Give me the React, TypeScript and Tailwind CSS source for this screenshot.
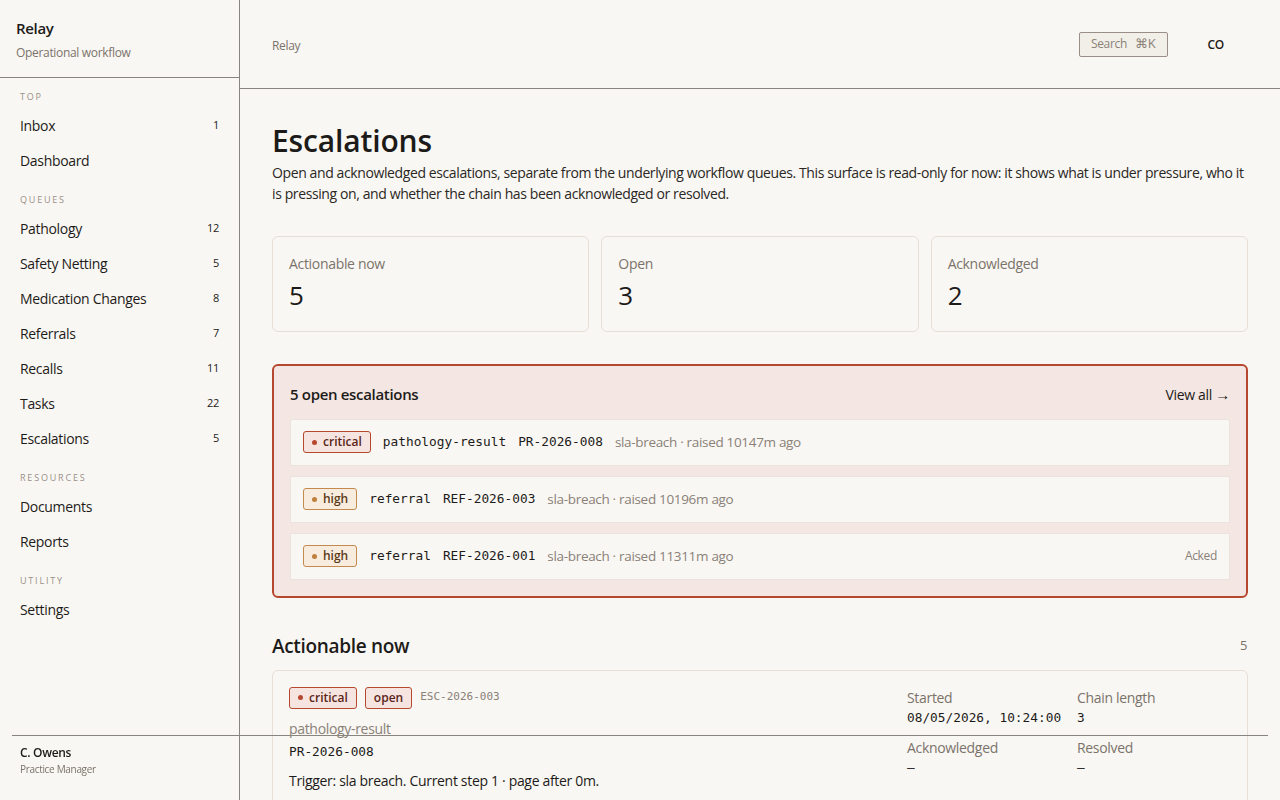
import React from 'react';

const sans = "font-['Open_Sans','Noto_Sans',sans-serif]";
const mono = "font-['DejaVu_Sans_Mono','Liberation_Mono',monospace] tracking-normal";

type NavItem = { label: string; count?: number };
type NavGroup = { title: string; items: NavItem[] };

const NAV: NavGroup[] = [
  { title: 'Top', items: [{ label: 'Inbox', count: 1 }, { label: 'Dashboard' }] },
  {
    title: 'Queues',
    items: [
      { label: 'Pathology', count: 12 },
      { label: 'Safety Netting', count: 5 },
      { label: 'Medication Changes', count: 8 },
      { label: 'Referrals', count: 7 },
      { label: 'Recalls', count: 11 },
      { label: 'Tasks', count: 22 },
      { label: 'Escalations', count: 5 },
    ],
  },
  { title: 'Resources', items: [{ label: 'Documents' }, { label: 'Reports' }] },
  { title: 'Utility', items: [{ label: 'Settings' }] },
];

const OPEN = [
  { sev: 'critical', kind: 'pathology-result', ref: 'PR-2026-008', ago: '10147m', acked: false },
  { sev: 'high', kind: 'referral', ref: 'REF-2026-003', ago: '10196m', acked: false },
  { sev: 'high', kind: 'referral', ref: 'REF-2026-001', ago: '11311m', acked: true },
];

function SevBadge({ sev }: { sev: string }) {
  const critical = sev === 'critical';
  return (
    <span
      className={`inline-flex items-center gap-1.5 h-[22px] px-2 rounded-[3px] border text-[12px] font-semibold tracking-normal ${
        critical ? 'border-[#b5482e] bg-[#f6e4e0] text-[#5a2418]' : 'border-[#c28a4c] bg-[#f8ecdf] text-[#5b3a16]'
      }`}
    >
      <span className={`w-[5px] h-[5px] rounded-full ${critical ? 'bg-[#b5482e]' : 'bg-[#c07f3a]'}`} />
      {sev}
    </span>
  );
}

function Sidebar() {
  return (
    <aside className="w-[240px] shrink-0 h-full border-r border-[#8a847e] flex flex-col">
      <div className="h-[78px] border-b border-[#8a847e] px-4 pt-[17px]">
        <div className="text-[15px] font-semibold text-[#1d1b19] leading-[22px]">Relay</div>
        <div className="text-[12px] text-[#7b736b] mt-[6px] leading-[16px]">Operational workflow</div>
      </div>
      <nav className="px-5 pt-[10px] flex flex-col gap-[13px]">
        {NAV.map(group => (
          <div key={group.title}>
            <div className="text-[9px] uppercase tracking-[0.2em] text-[#9a9088] h-[20px] leading-[18px]">{group.title}</div>
            {group.items.map(item => (
              <div key={item.label} className="h-[35px] flex items-center justify-between text-[14px] text-[#1d1b19] pr-[20px] -mr-5">
                <span>{item.label}</span>
                {item.count !== undefined && <span className="text-[11px] text-[#1d1b19]">{item.count}</span>}
              </div>
            ))}
          </div>
        ))}
      </nav>
    </aside>
  );
}

function StatCard({ label, value }: { label: string; value: number }) {
  return (
    <div className="border border-[#e6dfd7] rounded-[6px] px-4 pt-[18px] h-[96px]">
      <div className="text-[14px] text-[#7b736b] leading-[18px]">{label}</div>
      <div className="text-[26px] text-[#1d1b19] leading-[34px] mt-[5px]">{value}</div>
    </div>
  );
}

function Field({ label, value }: { label: string; value: string }) {
  return (
    <div>
      <div className="text-[14px] text-[#7b736b] leading-[20px]">{label}</div>
      <div className={`${mono} text-[12.8px] text-[#1d1b19] leading-[20px]`}>{value}</div>
    </div>
  );
}

export default function App() {
  return (
    <div className={`${sans} tracking-[-0.02em] h-screen w-full overflow-hidden bg-[#f9f7f3] flex relative`}>
      <Sidebar />
      <main className="flex-1 min-w-0 h-full overflow-hidden">
        <header className="h-[89px] border-b border-[#8a847e] flex items-center justify-between pl-8 pr-[56px] pt-[2px]">
          <span className="text-[12px] text-[#7b736b] mt-[2px]">Relay</span>
          <div className="flex items-center gap-[40px]">
            <span className="h-[25px] w-[89px] -mt-[2px] border border-[#9a8f88] rounded-[2px] bg-[#f2efe8] text-[12px] text-[#8a8178] flex items-center justify-center gap-2">
              Search <span className="text-[13px]">⌘K</span>
            </span>
            <span className="text-[12px] font-semibold text-[#1d1b19]">CO</span>
          </div>
        </header>

        <div className="px-8 pt-[32px]">
          <h1 className="text-[30px] font-semibold text-[#1d1b19] leading-[40px] tracking-[-0.005em]">Escalations</h1>
          <p className="text-[14px] text-[#2a2724] leading-[21px] mt-[1px] tracking-[-0.028em]">
            Open and acknowledged escalations, separate from the underlying workflow queues. This surface is read-only for now: it shows what is under pressure, who it is pressing on, and whether the chain has been acknowledged or resolved.
          </p>

          <div className="grid grid-cols-3 gap-3 mt-[32px]">
            <StatCard label="Actionable now" value={5} />
            <StatCard label="Open" value={3} />
            <StatCard label="Acknowledged" value={2} />
          </div>

          <section className="mt-[32px] border-2 border-[#b5482e] rounded-[6px] bg-[#f4e6e2] px-4 pt-[17px] pb-4">
            <div className="flex items-center justify-between mb-[13px]">
              <h2 className="text-[15px] font-semibold text-[#1d1b19] leading-[20px]">5 open escalations</h2>
              <span className="text-[14px] text-[#1d1b19]">View all <span className="text-[15px]">→</span></span>
            </div>
            <div className="flex flex-col gap-[10px]">
              {OPEN.map(row => (
                <div key={row.ref} className="h-[47px] bg-[#f9f7f3] border border-[#ebe2dd] rounded-[2px] flex items-center justify-between px-3">
                  <div className="flex items-center gap-3">
                    <SevBadge sev={row.sev} />
                    <span className={`${mono} text-[12.8px] text-[#1d1b19]`}>{row.kind}</span>
                    <span className={`${mono} text-[12.8px] text-[#1d1b19]`}>{row.ref}</span>
                    <span className="text-[13.5px] text-[#8a8178]">sla-breach · raised {row.ago} ago</span>
                  </div>
                  {row.acked && <span className="text-[12px] text-[#8a8178]">Acked</span>}
                </div>
              ))}
            </div>
          </section>

          <div className="flex items-center justify-between mt-[35px]">
            <h2 className="text-[19px] font-semibold text-[#1d1b19] leading-[26px]">Actionable now</h2>
            <span className="text-[13px] text-[#7b736b] mr-[1px]">5</span>
          </div>

          <div className="mt-[11px] border border-[#e6dfd7] rounded-[6px] px-4 pt-[16px] pb-6 flex">
            <div className="flex-1">
              <div className="flex items-center gap-2">
                <SevBadge sev="critical" />
                <span className="inline-flex items-center h-[22px] px-2 rounded-[3px] border border-[#b5482e] bg-[#f6e4e0] text-[12px] font-semibold tracking-normal text-[#5a2418]">open</span>
                <span className={`${mono} text-[11px] text-[#8a8178]`}>ESC-2026-003</span>
              </div>
              <div className="text-[14px] text-[#8a8178] mt-[10px] leading-[20px]">pathology-result</div>
              <div className={`${mono} text-[12.8px] text-[#1d1b19] mt-[3px] leading-[20px]`}>PR-2026-008</div>
              <div className="text-[14px] text-[#1d1b19] mt-[9px] leading-[20px]">Trigger: sla breach. Current step 1 · page after 0m.</div>
            </div>
            <div className="grid grid-cols-[170px_154px] gap-y-[10px] pt-[1px] self-start">
              <Field label="Started" value="08/05/2026, 10:24:00" />
              <Field label="Chain length" value="3" />
              <Field label="Acknowledged" value="—" />
              <Field label="Resolved" value="—" />
            </div>
          </div>
        </div>
      </main>

      {/* user footer, sits over the page bottom */}
      <div className="fixed left-3 right-3 bottom-0 h-[65px] border-t border-[#8a847e] px-2 pt-[9px]">
        <div className="text-[12px] font-semibold text-[#1d1b19] leading-[16px]">C. Owens</div>
        <div className="text-[10px] text-[#7b736b] leading-[14px] mt-[1px]">Practice Manager</div>
      </div>
    </div>
  );
}
